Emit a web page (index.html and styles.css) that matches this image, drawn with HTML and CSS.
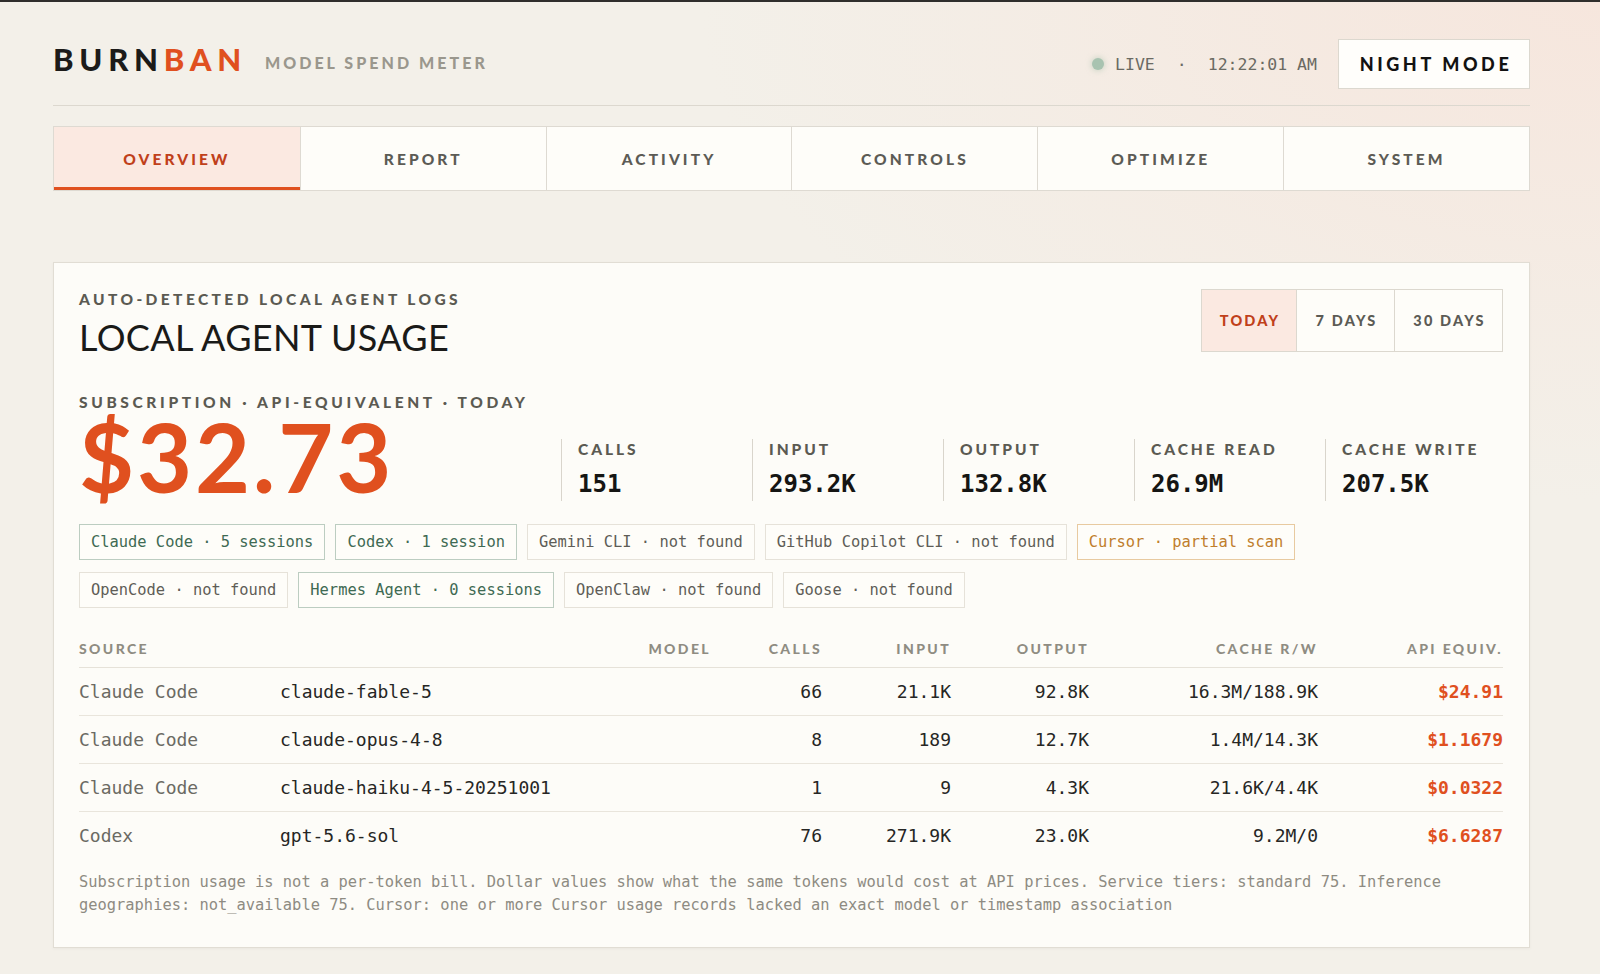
FILE: index.html
```html
<!DOCTYPE html>
<html lang="en">
<head>
    <meta charset="UTF-8">
    <meta name="viewport" content="width=device-width, initial-scale=1.0">
    <title>Burnban - Model Spend Meter</title>
    <link rel="stylesheet" href="styles.css">
</head>
<body>
    <div class="page">
        <header class="topbar">
            <div class="brand">
                <span class="logo">BURN<span class="logo-accent">BAN</span></span>
                <span class="tagline">MODEL SPEND METER</span>
            </div>
            <div class="status">
                <span class="live-dot"></span>
                <span class="live">LIVE</span>
                <span class="sep">·</span>
                <span class="clock">12:22:01 AM</span>
                <button class="night-btn">NIGHT MODE</button>
            </div>
        </header>

        <nav class="tabs">
            <a class="tab active">OVERVIEW</a>
            <a class="tab">REPORT</a>
            <a class="tab">ACTIVITY</a>
            <a class="tab">CONTROLS</a>
            <a class="tab">OPTIMIZE</a>
            <a class="tab">SYSTEM</a>
        </nav>

        <section class="card">
            <div class="card-head">
                <div>
                    <div class="eyebrow">AUTO-DETECTED LOCAL AGENT LOGS</div>
                    <h1 class="title">LOCAL AGENT USAGE</h1>
                </div>
                <div class="range">
                    <button class="range-btn active">TODAY</button>
                    <button class="range-btn">7 DAYS</button>
                    <button class="range-btn">30 DAYS</button>
                </div>
            </div>

            <div class="hero">
                <div class="total">
                    <div class="eyebrow wide">SUBSCRIPTION · API-EQUIVALENT · TODAY</div>
                    <div class="amount">$32.73</div>
                </div>
                <div class="stats">
                    <div class="stat"><div class="stat-label">CALLS</div><div class="stat-value">151</div></div>
                    <div class="stat"><div class="stat-label">INPUT</div><div class="stat-value">293.2K</div></div>
                    <div class="stat"><div class="stat-label">OUTPUT</div><div class="stat-value">132.8K</div></div>
                    <div class="stat"><div class="stat-label">CACHE READ</div><div class="stat-value">26.9M</div></div>
                    <div class="stat"><div class="stat-label">CACHE WRITE</div><div class="stat-value">207.5K</div></div>
                </div>
            </div>

            <div class="chips">
                <span class="chip found">Claude Code · 5 sessions</span>
                <span class="chip found">Codex · 1 session</span>
                <span class="chip">Gemini CLI · not found</span>
                <span class="chip">GitHub Copilot CLI · not found</span>
                <span class="chip partial">Cursor · partial scan</span>
                <span class="chip">OpenCode · not found</span>
                <span class="chip found">Hermes Agent · 0 sessions</span>
                <span class="chip">OpenClaw · not found</span>
                <span class="chip">Goose · not found</span>
            </div>

            <table class="usage">
                <colgroup>
                    <col style="width: 201px">
                    <col style="width: 431px">
                    <col style="width: 111px">
                    <col style="width: 129px">
                    <col style="width: 138px">
                    <col style="width: 229px">
                    <col style="width: 185px">
                </colgroup>
                <thead>
                    <tr>
                        <th>SOURCE</th>
                        <th>MODEL</th>
                        <th>CALLS</th>
                        <th>INPUT</th>
                        <th>OUTPUT</th>
                        <th>CACHE R/W</th>
                        <th>API EQUIV.</th>
                    </tr>
                </thead>
                <tbody>
                    <tr>
                        <td class="src">Claude Code</td>
                        <td class="model">claude-fable-5</td>
                        <td>66</td><td>21.1K</td><td>92.8K</td><td>16.3M/188.9K</td>
                        <td class="cost">$24.91</td>
                    </tr>
                    <tr>
                        <td class="src">Claude Code</td>
                        <td class="model">claude-opus-4-8</td>
                        <td>8</td><td>189</td><td>12.7K</td><td>1.4M/14.3K</td>
                        <td class="cost">$1.1679</td>
                    </tr>
                    <tr>
                        <td class="src">Claude Code</td>
                        <td class="model">claude-haiku-4-5-20251001</td>
                        <td>1</td><td>9</td><td>4.3K</td><td>21.6K/4.4K</td>
                        <td class="cost">$0.0322</td>
                    </tr>
                    <tr>
                        <td class="src">Codex</td>
                        <td class="model">gpt-5.6-sol</td>
                        <td>76</td><td>271.9K</td><td>23.0K</td><td>9.2M/0</td>
                        <td class="cost">$6.6287</td>
                    </tr>
                </tbody>
            </table>

            <p class="note">Subscription usage is not a per-token bill. Dollar values show what the same tokens would cost at API prices. Service tiers: standard 75. Inference geographies: not_available 75. Cursor: one or more Cursor usage records lacked an exact model or timestamp association</p>
        </section>
    </div>
</body>
</html>
```

FILE: styles.css
```css
html, body {
    margin: 0;
    padding: 0;
}

body {
    font-family: Lato, "Noto Sans", sans-serif;
    color: #1c1b19;
    background: radial-gradient(ellipse 900px 500px at 100% 0%, #f6e6dd 0%, rgba(246, 230, 221, 0) 100%), #f3f0e9;
    border-top: 2px solid #2f2e2c;
    min-height: 972px;
}

.page {
    width: 1477px;
    margin-left: 53px;
}

/* header */
.topbar {
    display: flex;
    align-items: center;
    justify-content: space-between;
    padding: 37px 0 16px;
    border-bottom: 1px solid #dcd8cf;
}

.brand {
    display: flex;
    align-items: baseline;
    align-self: flex-start;
    margin-top: 1px;
    gap: 18px;
}

.logo {
    font-size: 31px;
    font-weight: 900;
    letter-spacing: 0.185em;
    color: #1c1b19;
}

.logo-accent {
    color: #e0501f;
}

.tagline {
    font-size: 16px;
    font-weight: 900;
    letter-spacing: 0.19em;
    color: #9a978d;
    position: relative;
    top: -2px;
}

.status {
    display: flex;
    align-items: center;
    font-family: "DejaVu Sans Mono", monospace;
    font-size: 16.5px;
    color: #6b6a63;
}

.live-dot {
    width: 12px;
    height: 12px;
    border-radius: 50%;
    background: #a8c3b0;
    box-shadow: 0 0 6px rgba(150, 185, 160, 0.6);
    margin-right: 11px;
}

.sep {
    margin: 0 21px 0 22px;
}

.night-btn {
    margin-left: 21px;
    width: 192px;
    height: 50px;
    background: #fffefb;
    border: 1px solid #dcd8cf;
    font-family: Lato, sans-serif;
    font-size: 18px;
    font-weight: 900;
    letter-spacing: 0.2em;
    color: #121212;
    padding: 0 0 0 4px;
}

/* tabs */
.tabs {
    display: grid;
    grid-template-columns: repeat(6, 1fr);
    margin-top: 20px;
    border: 1px solid #dedad2;
    background: #fefdf9;
    height: 63px;
}

.tab {
    display: flex;
    align-items: center;
    justify-content: center;
    font-size: 15.5px;
    font-weight: 900;
    letter-spacing: 0.2em;
    color: #5c5b55;
    border-left: 1px solid #dedad2;
}

.tab:first-child {
    border-left: none;
}

.tab.active {
    background: #fbe9e1;
    color: #c0401a;
    box-shadow: inset 0 -3px 0 #e0501f;
}

/* card */
.card {
    margin-top: 71px;
    background: #fdfcf8;
    border: 1px solid #e1ddd4;
    box-shadow: 0 1px 3px rgba(0, 0, 0, 0.04);
    padding: 26px 26px 30px 25px;
}

.card-head {
    display: flex;
    justify-content: space-between;
    align-items: flex-start;
}

.eyebrow {
    font-size: 15.5px;
    line-height: 20px;
    font-weight: 900;
    letter-spacing: 0.22em;
    color: #5b5a52;
}

.eyebrow.wide {
    letter-spacing: 0.235em;
}

.title {
    margin: 8px 0 0;
    font-size: 36px;
    line-height: 40px;
    font-weight: 400;
    letter-spacing: 0.01em;
    color: #1a1a18;
}

.range {
    display: flex;
    border: 1px solid #dcd8cf;
    margin-top: 0;
}

.range-btn {
    height: 61px;
    border: none;
    border-left: 1px solid #dcd8cf;
    background: #fefdf9;
    font-family: Lato, sans-serif;
    font-size: 14.5px;
    font-weight: 900;
    letter-spacing: 0.15em;
    color: #5c5b55;
    padding: 0 0 0 2px;
}

.range-btn:nth-child(1) { width: 94px; border-left: none; }
.range-btn:nth-child(2) { width: 98px; }
.range-btn:nth-child(3) { width: 108px; }

.range-btn.active {
    background: #fbe9e1;
    color: #c0401a;
}

/* hero */
.hero {
    display: flex;
    align-items: flex-start;
    margin-top: 35px;
}

.total {
    width: 482px;
    flex: none;
}

.amount {
    margin-top: 5px;
    font-size: 95px;
    line-height: 78px;
    font-weight: 700;
    letter-spacing: 0.03em;
    color: #e0501f;
}

.stats {
    display: grid;
    grid-template-columns: repeat(5, 191px);
    margin-top: 47px;
}

.stat {
    border-left: 1px solid #d9d5cc;
    padding-left: 16px;
    height: 62px;
}

.stat-label {
    font-size: 15.5px;
    line-height: 20px;
    font-weight: 900;
    letter-spacing: 0.19em;
    color: #5b5a52;
}

.stat-value {
    margin-top: 10px;
    font-family: "DejaVu Sans Mono", monospace;
    font-size: 24px;
    line-height: 30px;
    font-weight: 700;
    color: #151513;
}

/* chips */
.chips {
    display: flex;
    flex-wrap: wrap;
    gap: 12px 10px;
    margin-top: 23px;
    width: 1240px;
}

.chip {
    height: 36px;
    box-sizing: border-box;
    padding: 0 11px;
    line-height: 34px;
    border: 1px solid #e6e2d9;
    font-family: "DejaVu Sans Mono", monospace;
    font-size: 15.4px;
    color: #5e5d57;
    background: #fefdf9;
}

.chip.found {
    color: #3e6a53;
    border-color: #bccdc1;
}

.chip.partial {
    color: #c07e2c;
    border-color: #e8caa0;
}

/* table */
.usage {
    width: 1424px;
    margin-top: 31px;
    border-collapse: collapse;
    table-layout: fixed;
}

.usage th {
    font-size: 14px;
    line-height: 20px;
    font-weight: 900;
    letter-spacing: 0.17em;
    color: #8f8c82;
    text-align: right;
    padding: 0 0 8px;
    border-bottom: 1px solid #e6e2d9;
}

.usage th:first-child {
    text-align: left;
}

.usage td {
    font-family: "DejaVu Sans Mono", monospace;
    font-size: 18px;
    height: 47px;
    padding: 0;
    text-align: right;
    color: #262624;
    border-bottom: 1px solid #e9e5dc;
}

.usage tbody tr:last-child td {
    border-bottom: none;
}

.usage td.src {
    text-align: left;
    color: #6b6a63;
}

.usage td.model {
    text-align: left;
}

.usage td.cost {
    color: #e0501f;
    font-weight: 700;
}

.note {
    margin: 12px 0 0;
    font-family: "DejaVu Sans Mono", monospace;
    font-size: 15.4px;
    line-height: 23px;
    color: #8e8b82;
}
```
